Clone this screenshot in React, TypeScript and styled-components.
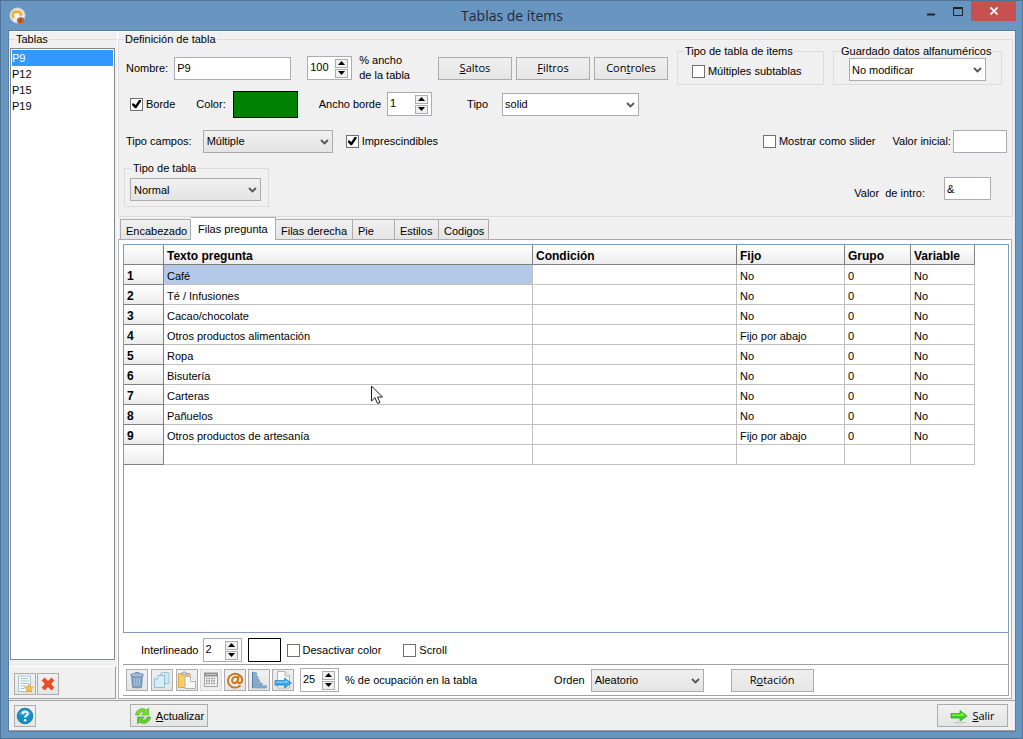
import React, { useState } from "react";
import styled, { createGlobalStyle, css } from "styled-components";

const face = "#f0f0f0";
const line = "#acacac";
const sans = '"Liberation Sans", Arial, sans-serif';
const ui = '"Open Sans", "Noto Sans", sans-serif';

const GlobalStyle = createGlobalStyle`
  *, *::before, *::after { box-sizing: border-box; }
  body { margin: 0; background: #6995c1; }
  body, button, input, select { font: 11px/14px ${sans}; color: #000; }
`;

const Window = styled.div`
  display: flex;
  flex-direction: column;
  min-height: 100vh;
  padding: 0 6px 6px 7px;
  border: 1px solid #4e7498;
  background: #6995c1;
`;

const TitleBar = styled.header`
  display: grid;
  grid-template-columns: 1fr auto 1fr;
  align-items: center;
  height: 29px;
`;

const AppIcon = styled.svg`
  display: block;
  width: 18px;
  height: 18px;
`;

const Title = styled.h1`
  margin: 0;
  font: 400 14px/20px ${ui};
  color: #1f2a36;
`;

const Caption = styled.div`
  display: flex;
  justify-content: flex-end;
  align-self: start;
`;

const CaptionButton = styled.button<{ $close?: boolean }>`
  display: grid;
  place-items: center;
  width: ${(p) => (p.$close ? 45 : 27)}px;
  height: 20px;
  padding: 0;
  border: 0;
  background: ${(p) => (p.$close ? "#c75050" : "transparent")};
`;

const Client = styled.div`
  display: flex;
  flex: 1;
  flex-direction: column;
  border: 1px solid #557ea5;
  background: ${face};
`;

const Main = styled.main`
  display: flex;
  flex: 1;
  border-top: 1px solid #fff;
`;

const Sidebar = styled.aside`
  display: flex;
  flex-direction: column;
  width: 108px;
  padding: 1px 1px 1px 0;
`;

const Group = styled.fieldset`
  min-width: 0;
  margin: 0;
  padding: 0 7px;
  border: 1px solid #dcdcdc;
`;

const Legend = styled.legend`
  padding: 0 1px;
  line-height: 12px;
  white-space: nowrap;
`;

const ListGroup = styled(Group)`
  display: flex;
  flex: 1;
  flex-direction: column;
  padding: 0;
  border-width: 1px 0 0;

  ${Legend} { margin-left: 6px; }
`;

const List = styled.ul`
  flex: 1;
  margin: 3px 1px 6px;
  padding: 1px;
  border: 1px solid #828790;
  background: #fff;
  list-style: none;
`;

const ListItem = styled.li<{ $selected: boolean }>`
  padding: 1px 0;
  line-height: 14px;
  cursor: default;
  ${(p) => p.$selected && css`background: #3399ff; color: #fff;`}
`;

const SideTools = styled.div`
  display: flex;
  gap: 1px;
  height: 33px;
  padding: 6px 4px;
  border: solid;
  border-width: 1px;
  border-color: #fff #a0a0a0 #a0a0a0 #fff;
`;

const Content = styled.section`
  display: flex;
  flex: 1;
  flex-direction: column;
  min-width: 0;
  padding: 1px 2px 1px 0;
  border-left: 1px solid #fff;
`;

const Definition = styled(Group)`
  padding: 0 5px 9px;
`;

const Line = styled.div<{ $height: number }>`
  display: flex;
  align-items: center;
  height: ${(p) => p.$height}px;
`;

const Spread = styled(Line)`
  justify-content: space-between;
`;

const Fields = styled.div<{ $gap?: number; $inset?: number }>`
  display: flex;
  align-items: center;
  gap: ${(p) => p.$gap ?? 4}px;
  padding-left: ${(p) => p.$inset ?? 0}px;
  white-space: nowrap;
`;

const TopFields = styled(Fields)`
  height: 40px;
  padding-top: 6px;
`;

const LastLine = styled(Spread)`
  align-items: flex-start;
  margin-top: 3px;
`;

const IntroFields = styled(Fields)`
  align-items: flex-end;
  padding: 15px 16px 0 0;
`;

const Box = styled(Group)<{ $width: number }>`
  align-self: flex-start;
  flex: none;
  width: ${(p) => p.$width}px;
  height: ${(p) => (p.$width > 145 ? 40 : 45)}px;
`;

const TypeBox = styled(Box)`
  padding: 4px 5px;
  ${Legend} { margin-left: 2px; }
`;

const SaveBox = styled(Box)`
  padding: 1px 15px;
  ${Legend} { margin-left: -9px; }
`;

const SubtableBox = styled(Box)`
  padding: 7px 14px;
  ${Legend} { margin-left: -8px; }
`;

const Label = styled.label``;

const WideNote = styled.label`
  line-height: 15px;
`;

const TextBox = styled.input<{ $width: number }>`
  width: ${(p) => p.$width}px;
  height: 23px;
  padding: 0 2px;
  border: 1px solid #abadb3;
  background: #fff;
`;

const Spin = styled.span<{ $width: number }>`
  display: inline-flex;
  align-items: center;
  justify-content: space-between;
  width: ${(p) => p.$width}px;
  height: 24px;
  padding: 0 3px 0 2px;
  border: 1px solid #abadb3;
  background: #fff;
`;

const SpinInput = styled.input`
  flex: 1;
  min-width: 0;
  height: 20px;
  padding: 0 1px 2px 0;
  border: 0;
  background: transparent;
`;

const SpinArrows = styled.span`
  display: flex;
  flex-direction: column;
  gap: 1px;
`;

const SpinButton = styled.button`
  display: grid;
  place-items: center;
  width: 13px;
  height: 9px;
  padding: 0;
  border: 1px solid #acacac;
  background: #f0f0f0;
`;

const SelectWrap = styled.span<{ $width: number; $flat?: boolean }>`
  display: inline-grid;
  position: relative;
  width: ${(p) => p.$width}px;
  height: 23px;
  border: 1px solid ${line};
  background: ${(p) => (p.$flat ? "#fff" : "linear-gradient(#f0f0f0, #e4e4e4)")};

  svg {
    position: absolute;
    top: 8px;
    right: 3px;
    pointer-events: none;
  }
`;

const NativeSelect = styled.select<{ $flat?: boolean }>`
  width: 100%;
  height: 21px;
  padding: 0 16px 0 ${(p) => (p.$flat ? 2 : 3)}px;
  border: 0;
  appearance: none;
  background: transparent;
`;

const CheckLabel = styled.label`
  display: inline-flex;
  align-items: center;
  gap: 3px;
  white-space: nowrap;
`;

const CheckBox = styled.input`
  display: grid;
  place-items: center;
  flex: none;
  width: 13px;
  height: 13px;
  margin: 0;
  border: 1px solid #707070;
  appearance: none;
  background: #fff;

  &:checked::before {
    content: "";
    width: 9px;
    height: 9px;
    background: #000;
    clip-path: polygon(0 44%, 22% 44%, 40% 62%, 78% 6%, 100% 6%, 100% 22%, 48% 96%, 34% 96%, 0 62%);
  }
`;

const Swatch = styled.button<{ $color: string; $small?: boolean }>`
  width: ${(p) => (p.$small ? 33 : 65)}px;
  height: ${(p) => (p.$small ? 24 : 27)}px;
  padding: 0;
  border: 1px solid #000;
  background: ${(p) => p.$color};
`;

const PushButton = styled.button<{ $width: number }>`
  display: inline-flex;
  align-items: center;
  justify-content: center;
  gap: 4px;
  width: ${(p) => p.$width}px;
  height: 23px;
  padding: 0;
  border: 1px solid ${line};
  background: linear-gradient(#f0f0f0, #e5e5e5);
  font: 11px/14px ${ui};
`;

const ToolButton = styled.button`
  display: grid;
  place-items: center;
  flex: none;
  width: 22px;
  height: 22px;
  padding: 0;
  border: 1px solid ${line};
  background: linear-gradient(#f0f0f0, #e5e5e5);

  &:disabled { border-color: #d9d9d9; background: #efefef; }
`;

const Tabs = styled.div`
  display: flex;
  align-items: flex-end;
  height: 22px;
  padding-left: 2px;
`;

const Tab = styled.button<{ $width: number; $active: boolean }>`
  width: ${(p) => p.$width}px;
  height: 20px;
  padding: 2px 0 0 5px;
  border: 1px solid ${line};
  border-bottom: 0;
  background: linear-gradient(#f0f0f0, #e5e5e5);
  text-align: left;
  white-space: nowrap;
  ${(p) =>
    p.$active &&
    css`
      z-index: 1;
      height: 23px;
      margin-bottom: -1px;
      padding: 0 0 1px 7px;
      background: #fff;
    `}

  & + & { border-left-width: ${(p) => (p.$active ? 1 : 0)}px; }
`;

const TabPage = styled.div`
  display: flex;
  flex: 1;
  flex-direction: column;
  margin-right: 1px;
  padding: 4px 2px 2px 4px;
  border: 1px solid ${line};
  background: #fff;
`;

const GridFrame = styled.div`
  position: relative;
  flex: 1;
  min-height: 240px;
  border: 1px solid #7f9db9;
  background: #fff;
`;

const Table = styled.table`
  width: 851px;
  border-spacing: 0;
  table-layout: fixed;
`;

const HeadCell = styled.th`
  height: 20px;
  padding: 2px 0 0 3px;
  border: solid #808080;
  border-width: 0 1px 1px 0;
  background: linear-gradient(#fff, #ececec);
  text-align: left;
  font-size: 12px;
  line-height: 14px;
`;

const Cell = styled.td<{ $selected?: boolean }>`
  height: 20px;
  padding: 2px 0 0 3px;
  border: solid #c0c0c0;
  border-width: 0 1px 1px 0;
  background: ${(p) => (p.$selected ? "#b4c8e8" : "#fff")};
  line-height: 14px;
`;

const Pointer = styled.svg`
  position: absolute;
  top: 140px;
  left: 247px;
`;

const OptionsBar = styled.div`
  display: flex;
  align-items: center;
  gap: 6px;
  height: 31px;
  padding: 3px 0 0 18px;
  border-right: 1px solid #a0a0a0;
`;

const Spaced = styled.span<{ $left: number }>`
  display: inline-flex;
  align-items: center;
  gap: 6px;
  margin-left: ${(p) => p.$left}px;
  white-space: nowrap;
`;

const ActionBar = styled.div`
  display: flex;
  align-items: center;
  height: 32px;
  padding-left: 3px;
  border: solid #a0a0a0;
  border-width: 1px 1px 1px 0;
`;

const ToolSet = styled.div<{ $gap: number }>`
  display: flex;
  gap: ${(p) => p.$gap}px;
  margin-right: 2px;
`;

const Footer = styled.footer`
  display: flex;
  align-items: center;
  height: 31px;
  padding: 0 7px 0 5px;
  border-top: 1px solid #a0a0a0;
  border-bottom: 1px solid #a0a0a0;
`;

const Refresh = styled(PushButton)`
  margin: 0 auto 0 94px;
  font-family: ${sans};
`;

function Chevron() {
  return (
    <svg width="9" height="6" viewBox="0 0 9 6" aria-hidden="true">
      <path d="M1 1l3.500 3.500L8 1" fill="none" stroke="#555" strokeWidth="1.800" />
    </svg>
  );
}

function Select(props: { id?: string; label?: string; width: number; flat?: boolean; value: string }) {
  return (
    <SelectWrap $width={props.width} $flat={props.flat}>
      <NativeSelect id={props.id} aria-label={props.label} defaultValue={props.value} $flat={props.flat}>
        <option>{props.value}</option>
      </NativeSelect>
      <Chevron />
    </SelectWrap>
  );
}

function Spinner({ id, width, start }: { id: string; width: number; start: number }) {
  const [value, setValue] = useState(start);
  return (
    <Spin $width={width}>
      <SpinInput id={id} value={value} onChange={(e) => setValue(Number(e.target.value) || 0)} />
      <SpinArrows>
        <SpinButton type="button" aria-label="Aumentar" onClick={() => setValue(value + 1)}>
          <svg width="7" height="4" viewBox="0 0 7 4"><path d="M0 4L3.500 0L7 4z" /></svg>
        </SpinButton>
        <SpinButton type="button" aria-label="Disminuir" onClick={() => setValue(value - 1)}>
          <svg width="7" height="4" viewBox="0 0 7 4"><path d="M0 0L3.500 4L7 0z" /></svg>
        </SpinButton>
      </SpinArrows>
    </Spin>
  );
}

function Check({ children, checked }: { children: React.ReactNode; checked?: boolean }) {
  return (
    <CheckLabel>
      <CheckBox type="checkbox" defaultChecked={checked} />
      {children}
    </CheckLabel>
  );
}

function Icon({ children, size = 18 }: { children: React.ReactNode; size?: number }) {
  return (
    <svg width={size} height={size} viewBox="0 0 18 18" aria-hidden="true">
      {children}
    </svg>
  );
}

const NewIcon = () => (
  <Icon>
    <path d="M2.500 1h12v15.500h-12z" fill="#f5fafb" stroke="#a9c4cc" />
    <path d="M5 3.500h7M4.500 6h8.500M4.500 8.500h8.500M4.500 11h6M4.500 13.500h4" stroke="#a5c3cf" />
    <path d="M13 9l1.400 2.800 3.100.4-2.300 2.100.6 3-2.800-1.400-2.800 1.400.6-3-2.300-2.100 3.100-.4z" fill="#f9bb4a" stroke="#e69a24" strokeWidth=".6" />
  </Icon>
);
const DeleteIcon = () => (
  <Icon>
    <path d="M3.200 5.500L5.600 3 9 6.400 12.500 3l2.400 2.500L11.600 9l3.300 3.500-2.400 2.500L9 11.600 5.600 15l-2.400-2.500L6.400 9z" fill="#ee4a21" stroke="#d93d18" strokeWidth=".8" strokeLinejoin="round" />
  </Icon>
);
const HelpIcon = () => (
  <Icon>
    <circle cx="9" cy="9" r="7.800" fill="#128fc4" stroke="#0c6f9d" strokeWidth=".8" />
    <path d="M3 7a6.500 6.500 0 0112 0q-6 3-12 0z" fill="#3aa9d6" />
    <path d="M6.500 7c0-3.400 5.200-3.300 5.200-.3 0 1.900-2.600 1.900-2.600 3.800" fill="none" stroke="#fff" strokeWidth="2" />
    <circle cx="9.100" cy="13.200" r="1.250" fill="#fff" />
  </Icon>
);
const TrashIcon = () => (
  <Icon>
    <path d="M3.500 5h11l-1 11.500q-4.500 1-9 0z" fill="#7c9fc2" stroke="#6286ab" strokeWidth=".7" />
    <path d="M6.300 7l.4 8M9 7v8M11.700 7l-.4 8" stroke="#b9cee2" />
    <ellipse cx="9" cy="4" rx="6.600" ry="2" fill="#a5bdd5" stroke="#6b8db0" strokeWidth=".8" />
    <path d="M7 2q2-1.500 4 0" fill="none" stroke="#6b8db0" />
  </Icon>
);
const CopyIcon = () => (
  <Icon>
    <path d="M8.500 1.500h7l.5.500v10.500h-8.500V2.500z" fill="#cfe5ee" stroke="#9fc5d6" />
    <path d="M5 4.500h6.500v12h-10V8z" fill="#d9edf4" stroke="#8fbdd1" />
    <path d="M5 4.500V8H1.500" fill="#fff" stroke="#8fbdd1" />
  </Icon>
);
const PasteIcon = () => (
  <Icon>
    <path d="M.5 2.500h11.500v14h-11.500z" fill="#f6cf62" stroke="#dca935" />
    <path d="M3.500 3.800V2q2.700-2.500 5.500 0v1.800z" fill="#c9cfd3" stroke="#8f999f" strokeWidth=".7" />
    <path d="M7 5.500h5.500l5 5v7H7z" fill="#f7f7f7" stroke="#b3b3b3" />
    <path d="M12.500 5.500v5h5" fill="#fff" stroke="#b3b3b3" />
  </Icon>
);
const CalendarIcon = () => (
  <Icon>
    <path d="M2.500 2.500h13v13h-13z" fill="#f3f3f3" stroke="#a0a0a0" />
    <path d="M2 1.500h14v4H2z" fill="#929292" />
    <path d="M4 3.500h10" stroke="#c4c4c4" />
    <path d="M4 7.500h10M4 10h10M4 12.500h10" stroke="#8c8c8c" strokeWidth="1.300" strokeDasharray="1.500 1" />
  </Icon>
);
const AtIcon = () => (
  <Icon>
    <path d="M14.500 14.300A7.200 6.900 0 1116.200 8.600c0 4.600-5 4.600-4.300 1.200l.8-4.700M12 8.400c0-3.900-5.600-3-5.900 1-.2 3.600 4.400 3.400 5.400.2" fill="none" stroke="#c9791a" strokeWidth="1.900" />
  </Icon>
);
const StepsIcon = () => (
  <Icon>
    <path d="M2.500 1l4 .8v2.400l-4-.5zM2.500 4.700l5.500.7v2.300l-5.500-.4zM2.500 8.200l7 .5v2.300l-7-.2zM2.500 11.600l9.500.3v2.200l-9.500-.1zM2.500 14.800h14v2.200h-14z" fill="#86b0d4" stroke="#5f8db6" strokeWidth=".6" />
    <path d="M2.500 1v16" stroke="#5581aa" />
  </Icon>
);
const ExportIcon = () => (
  <Icon>
    <path d="M3.500.5h7.500l4.500 4.500v12h-12z" fill="#fafafa" stroke="#b5b5b5" />
    <path d="M11 .5V5h4.500" fill="#e8e8e8" stroke="#b5b5b5" />
    <path d="M1 9.500h9.500V7L17.500 12l-7 5v-2.800H1z" fill="#3aa5e6" stroke="#1c82c4" strokeWidth=".7" />
    <path d="M2 10.500h9.500V9l3.500 2.800H2z" fill="#8fd0f5" />
  </Icon>
);
const RefreshIcon = () => (
  <Icon>
    <path d="M1.500 8C2 2.500 8 0 12.500 3L14.500 1v7H7.500L10 5.500C8 4.200 5.500 5.200 5 8z" fill="#7ada3c" stroke="#4ab41f" strokeWidth=".7" />
    <path d="M16.500 10c-.5 5.500-6.500 8-11 5L3.500 17v-7h7L8 12.500c2 1.300 4.500.3 5-2.500z" fill="#62cf2d" stroke="#42a81b" strokeWidth=".7" />
  </Icon>
);
const ExitIcon = () => (
  <Icon>
    <ellipse cx="10" cy="15.500" rx="6" ry="1" fill="#c9cec6" />
    <path d="M1 6.500h9V3.500l7 5.500-7 5v-3H1z" fill="#35cf25" stroke="#1fa51a" strokeWidth=".7" />
    <path d="M2 7.500h9V5.500L15 8.800H2z" fill="#a4ef3a" />
  </Icon>
);

const tables = ["P9", "P12", "P15", "P19"];

const tabs: [string, number][] = [
  ["Encabezado", 71],
  ["Filas pregunta", 85],
  ["Filas derecha", 77],
  ["Pie", 42],
  ["Estilos", 44],
  ["Codigos", 50],
];

const rows: [string, string][] = [
  ["Café", "No"],
  ["Té / Infusiones", "No"],
  ["Cacao/chocolate", "No"],
  ["Otros productos alimentación", "Fijo por abajo"],
  ["Ropa", "No"],
  ["Bisutería", "No"],
  ["Carteras", "No"],
  ["Pañuelos", "No"],
  ["Otros productos de artesanía", "Fijo por abajo"],
];

const columns = [40, 369, 204, 108, 66, 64];

export default function App() {
  const [table, setTable] = useState("P9");
  const [tab, setTab] = useState("Filas pregunta");

  return (
    <>
      <GlobalStyle />
      <Window>
        <TitleBar>
          <AppIcon viewBox="0 0 18 18" aria-hidden="true">
            <circle cx="9.500" cy="8.500" r="7.500" fill="#e6e8ee" stroke="#cbd3df" />
            <path d="M5.500 11C3.500 7.500 5 4.500 8.500 4.800c3-.8 5 1 4.500 4" fill="none" stroke="#f2b02b" strokeWidth="2.800" />
            <circle cx="9" cy="8.500" r="1.800" fill="#fff" />
            <path d="M9 12l3-2 4 1v5l-5 1-2-2z" fill="#c96a35" />
            <path d="M11 13l3-1M11 15l3-1" stroke="#8d3c18" />
          </AppIcon>
          <Title>Tablas de ítems</Title>
          <Caption>
            <CaptionButton type="button" aria-label="Minimizar">
              <svg width="10" height="9" viewBox="0 0 10 9"><path d="M1 7.500h8" stroke="#222" strokeWidth="2" /></svg>
            </CaptionButton>
            <CaptionButton type="button" aria-label="Maximizar">
              <svg width="10" height="9" viewBox="0 0 10 9"><path d="M.5 1v7.500h9V1M0 1h10" fill="none" stroke="#222" /><path d="M0 1h10" stroke="#222" strokeWidth="2" /></svg>
            </CaptionButton>
            <CaptionButton type="button" $close aria-label="Cerrar">
              <svg width="8" height="8" viewBox="0 0 8 8"><path d="M.5.5l7 7M7.500.5l-7 7" stroke="#fff" strokeWidth="1.700" /></svg>
            </CaptionButton>
          </Caption>
        </TitleBar>

        <Client>
          <Main>
            <Sidebar>
              <ListGroup>
                <Legend>Tablas</Legend>
                <List role="listbox" aria-label="Tablas">
                  {tables.map((name) => (
                    <ListItem key={name} role="option" aria-selected={name === table} $selected={name === table} onClick={() => setTable(name)}>
                      {name}
                    </ListItem>
                  ))}
                </List>
              </ListGroup>
              <SideTools>
                <ToolButton type="button" aria-label="Nueva tabla"><NewIcon /></ToolButton>
                <ToolButton type="button" aria-label="Eliminar tabla"><DeleteIcon /></ToolButton>
              </SideTools>
            </Sidebar>

            <Content>
              <Definition>
                <Legend>Definición de tabla</Legend>
                <Line $height={40}>
                  <TopFields $gap={28} $inset={2}>
                    <Fields $gap={7}>
                      <Fields $gap={16}>
                        <Fields $gap={6}>
                          <Label htmlFor="nombre">Nombre:</Label>
                          <TextBox id="nombre" $width={117} defaultValue="P9" />
                        </Fields>
                        <Spinner id="ancho" width={45} start={100} />
                      </Fields>
                      <WideNote htmlFor="ancho">% ancho<br />de la tabla</WideNote>
                    </Fields>
                    <Fields>
                      <PushButton type="button" $width={74}><span><u>S</u>altos</span></PushButton>
                      <PushButton type="button" $width={74}><span><u>F</u>iltros</span></PushButton>
                      <PushButton type="button" $width={74}><span>Con<u>t</u>roles</span></PushButton>
                    </Fields>
                  </TopFields>
                  <Fields $gap={9} $inset={9}>
                    <SubtableBox $width={147}>
                      <Legend>Tipo de tabla de items</Legend>
                      <Check>Múltiples subtablas</Check>
                    </SubtableBox>
                    <SaveBox $width={169}>
                      <Legend>Guardado datos alfanuméricos</Legend>
                      <Select label="Guardado datos alfanuméricos" width={137} flat value="No modificar" />
                    </SaveBox>
                  </Fields>
                </Line>

                <Line $height={38}>
                  <Fields $gap={21} $inset={6}>
                    <Check checked>Borde</Check>
                    <Fields $gap={7}>
                      <Label htmlFor="color">Color:</Label>
                      <Swatch type="button" id="color" $color="#008000" />
                    </Fields>
                    <Fields $gap={6}>
                      <Label htmlFor="borde">Ancho borde</Label>
                      <Spinner id="borde" width={45} start={1} />
                    </Fields>
                  </Fields>
                  <Fields $gap={14} $inset={35}>
                    <Label htmlFor="tipo">Tipo</Label>
                    <Select id="tipo" width={137} flat value="solid" />
                  </Fields>
                </Line>

                <Spread $height={36}>
                  <Fields $gap={13} $inset={2}>
                    <Fields $gap={11}>
                      <Label htmlFor="campos">Tipo campos:</Label>
                      <Select id="campos" width={130} value="Múltiple" />
                    </Fields>
                    <Check checked>Imprescindibles</Check>
                  </Fields>
                  <Fields $gap={17}>
                    <Check>Mostrar como slider</Check>
                    <Fields $gap={2}>
                      <Label htmlFor="inicial">Valor inicial:</Label>
                      <TextBox id="inicial" $width={54} />
                    </Fields>
                  </Fields>
                </Spread>

                <LastLine $height={45}>
                  <TypeBox $width={145}>
                    <Legend>Tipo de tabla</Legend>
                    <Select label="Tipo de tabla" width={131} value="Normal" />
                  </TypeBox>
                  <IntroFields $gap={19}>
                    <Label htmlFor="intro">Valor&nbsp; de intro:</Label>
                    <TextBox id="intro" $width={47} defaultValue="&" />
                  </IntroFields>
                </LastLine>
              </Definition>

              <Tabs role="tablist">
                {tabs.map(([name, width]) => (
                  <Tab key={name} type="button" role="tab" aria-selected={name === tab} $width={width} $active={name === tab} onClick={() => setTab(name)}>
                    {name}
                  </Tab>
                ))}
              </Tabs>

              <TabPage>
                <GridFrame>
                  <Table>
                    <colgroup>
                      {columns.map((width, i) => <col key={i} width={width} />)}
                    </colgroup>
                    <thead>
                      <tr>
                        <HeadCell />
                        <HeadCell>Texto pregunta</HeadCell>
                        <HeadCell>Condición</HeadCell>
                        <HeadCell>Fijo</HeadCell>
                        <HeadCell>Grupo</HeadCell>
                        <HeadCell>Variable</HeadCell>
                      </tr>
                    </thead>
                    <tbody>
                      {rows.map(([text, fixed], i) => (
                        <tr key={text}>
                          <HeadCell scope="row">{i + 1}</HeadCell>
                          <Cell $selected={i === 0}>{text}</Cell>
                          <Cell />
                          <Cell>{fixed}</Cell>
                          <Cell>0</Cell>
                          <Cell>No</Cell>
                        </tr>
                      ))}
                      <tr>
                        <HeadCell />
                        <Cell /><Cell /><Cell /><Cell /><Cell />
                      </tr>
                    </tbody>
                  </Table>
                  <Pointer width="13" height="20" viewBox="0 0 13 20" aria-hidden="true">
                    <path d="M.5 1v15l3.500-3.300 2.500 5.800 2.500-1-2.500-5.500h5z" fill="#fff" stroke="#1a1a26" />
                  </Pointer>
                </GridFrame>

                <OptionsBar>
                  <Fields>
                    <Label htmlFor="interlineado">Interlineado</Label>
                    <Spinner id="interlineado" width={39} start={2} />
                  </Fields>
                  <Swatch type="button" aria-label="Color de fila" $color="#fff" $small />
                  <Check>Desactivar color</Check>
                  <Spaced $left={16}><Check>Scroll</Check></Spaced>
                </OptionsBar>

                <ActionBar>
                  <ToolSet $gap={3}>
                    <ToolButton type="button" aria-label="Borrar"><TrashIcon /></ToolButton>
                    <ToolButton type="button" aria-label="Copiar"><CopyIcon /></ToolButton>
                    <ToolButton type="button" aria-label="Pegar"><PasteIcon /></ToolButton>
                  </ToolSet>
                  <ToolSet $gap={2}>
                    <ToolButton type="button" disabled aria-label="Calendario"><CalendarIcon /></ToolButton>
                    <ToolButton type="button" aria-label="Arroba"><AtIcon /></ToolButton>
                    <ToolButton type="button" aria-label="Ordenar"><StepsIcon /></ToolButton>
                    <ToolButton type="button" aria-label="Exportar"><ExportIcon /></ToolButton>
                  </ToolSet>
                  <Spaced $left={4}>
                    <Spinner id="ocupacion" width={39} start={25} />
                    <Label htmlFor="ocupacion">% de ocupación en la tabla</Label>
                  </Spaced>
                  <Spaced $left={77}>
                    <Label htmlFor="orden">Orden</Label>
                    <Select id="orden" width={113} value="Aleatorio" />
                  </Spaced>
                  <Spaced $left={27}>
                    <PushButton type="button" $width={83}><span>R<u>o</u>tación</span></PushButton>
                  </Spaced>
                </ActionBar>
              </TabPage>
            </Content>
          </Main>

          <Footer>
            <ToolButton type="button" aria-label="Ayuda"><HelpIcon /></ToolButton>
            <Refresh type="button" $width={78}><RefreshIcon /><span><u>A</u>ctualizar</span></Refresh>
            <PushButton type="button" $width={71}><ExitIcon /><span><u>S</u>alir</span></PushButton>
          </Footer>
        </Client>
      </Window>
    </>
  );
}
